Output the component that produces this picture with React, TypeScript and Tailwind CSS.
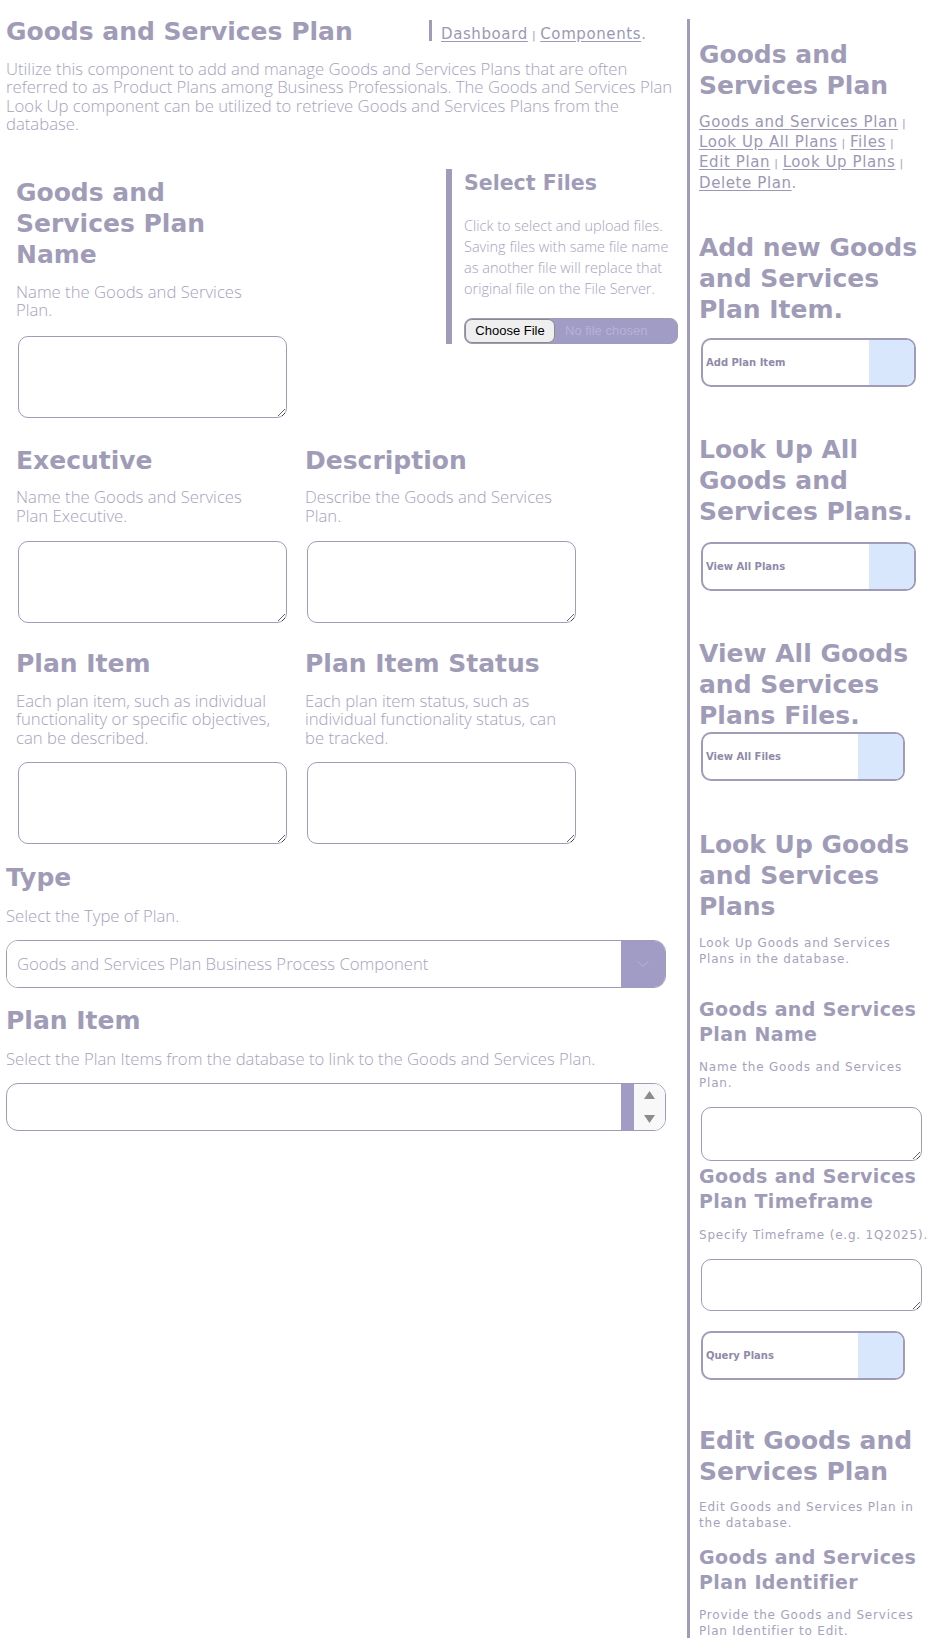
import { ChevronDown } from 'lucide-react';

const heading = "text-[25px] font-bold leading-[31px] text-[#a09cb8]";
const body = "font-['Open_Sans',sans-serif] font-light text-[16.7px] leading-[18.4px] text-[#a6a2bd]";
const sideText = "w-[220px] text-[12px] leading-[16px] tracking-[0.8px] text-[#a6a2bd]";
const sideSub = "text-[19px] font-bold leading-[25px] tracking-[0.4px] text-[#a09cb8]";
const link = "underline underline-offset-2 text-[#9c98b4]";

function Sep() {
  return <span className="text-[11px] text-[#a6a2bd]"> | </span>;
}

function Field({ title, desc, top }: { title: string; desc: string; top: string }) {
  return (
    <div className="w-[289px]">
      <h3 className={`w-[262px] ${heading}`}>{title}</h3>
      <p className={`mt-[12.5px] w-[262px] ${body}`}>{desc}</p>
      <textarea className={`${top} ml-[2px] block h-[82px] w-[269px] rounded-[10px] border border-[#a09cb8] bg-white`} />
    </div>
  );
}

function SideButton({ label, wide }: { label: string; wide: boolean }) {
  return (
    <button
      className={`ml-[2px] flex h-[49px] ${wide ? 'w-[215px]' : 'w-[204px]'} overflow-hidden rounded-[10px] border-2 border-[#a09cb8] bg-white`}
    >
      <span className="flex flex-1 items-center pl-[3px] text-[10px] font-bold text-[#8f8aa9]">{label}</span>
      <span className="w-[45px] bg-[#d8e7fb]" />
    </button>
  );
}

export default function App() {
  return (
    <div className="flex min-h-[1638px] bg-white font-['DejaVu_Sans',sans-serif]">
      <main className="w-[687px] shrink-0 pl-[6px] pt-[15.5px]">
        <div className="flex items-start">
          <h1 className={`w-[423px] ${heading}`}>Goods and Services Plan</h1>
          <span className="mt-[4.5px] h-[21px] w-[3px] bg-[#a09cb8]" />
          <nav className="ml-[9px] mt-[9px] text-[15px] leading-[18px] tracking-[0.6px]">
            <a className={link}>Dashboard</a>
            <Sep />
            <a className={link}>Components</a>
            <span className="text-[#a6a2bd]">.</span>
          </nav>
        </div>

        <p className={`mt-[13.5px] w-[680px] ${body}`}>
          Utilize this component to add and manage Goods and Services Plans that are often
          <br />
          referred to as Product Plans among Business Professionals. The Goods and Services Plan
          <br />
          Look Up component can be utilized to retrieve Goods and Services Plans from the
          <br />
          database.
        </p>

        <section className="mt-[35px] flex items-start">
          <div className="w-[440px] pl-[10px] pt-[8.5px]">
            <Field title="Goods and Services Plan Name" desc="Name the Goods and Services Plan." top="mt-[17px]" />
          </div>
          <div className="w-[232px] border-l-[6px] border-[#a09cb8] pl-[12px] pt-[1px]">
            <h3 className="text-[20.5px] font-bold leading-[26px] text-[#a09cb8]">Select Files</h3>
            <p className="mt-[19.5px] w-[214px] font-['Open_Sans',sans-serif] text-[14.5px] font-light leading-[21px] text-[#a6a2bd]">
              Click to select and upload files. Saving files with same file name as another file will replace that
              original file on the File Server.
            </p>
            <div className="mt-[18.5px] flex h-[26px] w-[214px] items-center overflow-hidden rounded-[8px] border border-[#a09cb8] bg-[#a09cc6]">
              <button className="h-full w-[90px] rounded-[7px] border border-[#8a8a8a] bg-[#efefef] font-['Liberation_Sans',sans-serif] text-[13px] text-black">
                Choose File
              </button>
              <span className="pl-[10px] font-['Liberation_Sans',sans-serif] text-[13px] text-[#b6b2d6]">No file chosen</span>
            </div>
          </div>
        </section>

        <section className="mt-[26.5px] flex pl-[10px]">
          <Field title="Executive" desc="Name the Goods and Services Plan Executive." top="mt-[16px]" />
          <Field title="Description" desc="Describe the Goods and Services Plan." top="mt-[16px]" />
        </section>

        <section className="mt-[25px] flex pl-[10px]">
          <Field
            title="Plan Item"
            desc="Each plan item, such as individual functionality or specific objectives, can be described."
            top="mt-[15.5px]"
          />
          <Field
            title="Plan Item Status"
            desc="Each plan item status, such as individual functionality status, can be tracked."
            top="mt-[15.5px]"
          />
        </section>

        <h3 className={`mt-[18px] ${heading}`}>Type</h3>
        <p className={`mt-[13.5px] ${body}`}>Select the Type of Plan.</p>
        <div className="mt-[14.5px] flex h-[48px] w-[660px] overflow-hidden rounded-[12px] border border-[#a09cb8] bg-white">
          <select className={`flex-1 appearance-none bg-white pl-[10px] outline-none ${body}`}>
            <option>Goods and Services Plan Business Process Component</option>
          </select>
          <span className="flex w-[44px] items-center justify-center bg-[#a09cc6]">
            <ChevronDown className="h-[20px] w-[20px] text-[#b9b5d5]" strokeWidth={1.1} />
          </span>
        </div>

        <h3 className={`mt-[17.5px] ${heading}`}>Plan Item</h3>
        <p className={`mt-[13.5px] ${body}`}>Select the Plan Items from the database to link to the Goods and Services Plan.</p>
        <div className="mt-[14.5px] flex h-[48px] w-[660px] overflow-hidden rounded-[12px] border border-[#a09cb8] bg-white">
          <div className="flex-1" />
          <span className="w-[13px] bg-[#a09cc6]" />
          <span className="flex w-[31px] flex-col items-center justify-between bg-[#f8f8f8] py-[7px]">
            <svg width="11" height="8" viewBox="0 0 11 8">
              <path d="M5.5 0 L11 8 L0 8 Z" fill="#8c8c8c" />
            </svg>
            <svg width="11" height="8" viewBox="0 0 11 8">
              <path d="M0 0 L11 0 L5.5 8 Z" fill="#8c8c8c" />
            </svg>
          </span>
        </div>
      </main>

      <aside className="mt-[19px] w-[240px] border-l-[3px] border-[#a09cb8] pb-[20px] pl-[9px] pt-[19.5px]">
        <div className="w-[228px]">
          <h2 className={heading}>Goods and Services Plan</h2>
          <p className="mt-[12.5px] text-[15px] leading-[18.2px] tracking-[0.6px] text-[#a6a2bd]">
            <a className={link}>Goods and Services Plan</a>
            <Sep />
            <a className={link}>Look Up All Plans</a>
            <Sep />
            <a className={link}>Files</a>
            <Sep />
            <a className={link}>Edit Plan</a>
            <Sep />
            <a className={link}>Look Up Plans</a>
            <Sep />
            <a className={link}>Delete Plan</a>.
          </p>

          <h2 className={`mt-[40px] ${heading}`}>Add new Goods and Services Plan Item.</h2>
          <div className="mt-[13.5px]">
            <SideButton label="Add Plan Item" wide />
          </div>

          <h2 className={`mt-[47px] ${heading}`}>Look Up All Goods and Services Plans.</h2>
          <div className="mt-[14.5px]">
            <SideButton label="View All Plans" wide />
          </div>

          <h2 className={`mt-[47.5px] ${heading}`}>View All Goods and Services Plans Files.</h2>
          <div className="mt-[0.5px]">
            <SideButton label="View All Files" wide={false} />
          </div>

          <h2 className={`mt-[48.5px] ${heading}`}>Look Up Goods and Services Plans</h2>
          <p className={`mt-[12.5px] ${sideText}`}>Look Up Goods and Services Plans in the database.</p>
          <h3 className={`mt-[30.5px] ${sideSub}`}>Goods and Services Plan Name</h3>
          <p className={`mt-[12px] ${sideText}`}>Name the Goods and Services Plan.</p>
          <textarea className="ml-[2px] mt-[15.5px] block h-[54px] w-[221px] rounded-[10px] border border-[#a09cb8] bg-white" />
          <h3 className={`mt-[3.5px] ${sideSub}`}>Goods and Services Plan Timeframe</h3>
          <p className={`mt-[12.5px] whitespace-nowrap ${sideText}`}>Specify Timeframe (e.g. 1Q2025).</p>
          <textarea className="ml-[2px] mt-[16px] block h-[52px] w-[221px] rounded-[10px] border border-[#a09cb8] bg-white" />
          <div className="mt-[20px]">
            <SideButton label="Query Plans" wide={false} />
          </div>

          <h2 className={`mt-[45.5px] ${heading}`}>Edit Goods and Services Plan</h2>
          <p className={`mt-[11.5px] ${sideText}`}>Edit Goods and Services Plan in the database.</p>
          <h3 className={`mt-[14px] ${sideSub}`}>Goods and Services Plan Identifier</h3>
          <p className={`mt-[12.5px] ${sideText}`}>Provide the Goods and Services Plan Identifier to Edit.</p>
        </div>
      </aside>
    </div>
  );
}
